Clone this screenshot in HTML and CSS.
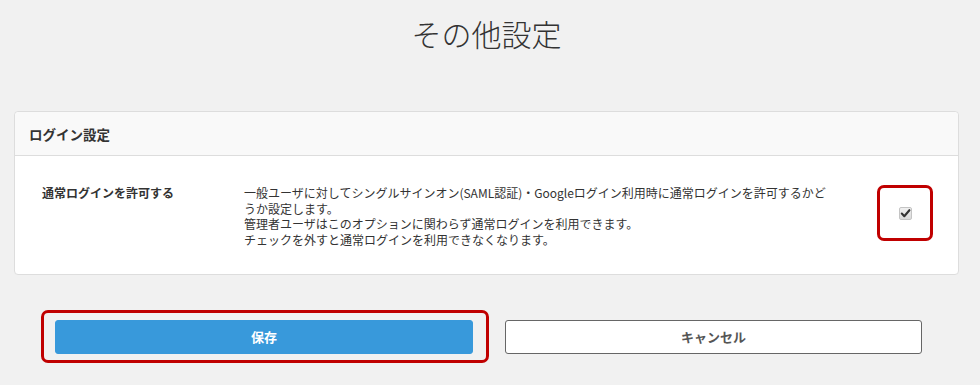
FILE: index.html
```html
<!DOCTYPE html>
<html lang="ja">
<head>
    <meta charset="UTF-8">
    <meta name="viewport" content="width=device-width, initial-scale=1.0">
    <title>その他設定</title>
    <link rel="stylesheet" href="styles.css">
</head>
<body>
    <div class="container">
        <h1 class="page-title">その他設定</h1>

        <div class="panel">
            <div class="panel-heading">ログイン設定</div>
            <div class="panel-body">
                <div class="setting-row">
                    <div class="setting-label">通常ログインを許可する</div>
                    <div class="setting-desc">
                        一般ユーザに対してシングルサインオン(SAML認証)・Googleログイン利用時に通常ログインを許可するかどうか設定します。<br>
                        管理者ユーザはこのオプションに関わらず通常ログインを利用できます。<br>
                        チェックを外すと通常ログインを利用できなくなります。
                    </div>
                    <div class="setting-check highlight">
                        <span class="check-box">
                            <svg width="11" height="11" viewBox="0 0 11 11">
                                <path d="M1.8 5.6 L4.3 8.2 L9.4 2.2" fill="none" stroke="#333" stroke-width="2.1" stroke-linecap="round" stroke-linejoin="round"/>
                            </svg>
                        </span>
                    </div>
                </div>
            </div>
        </div>

        <div class="actions">
            <div class="action-cell highlight">
                <button class="btn btn-primary">保存</button>
            </div>
            <div class="action-cell">
                <button class="btn btn-default">キャンセル</button>
            </div>
        </div>
    </div>
</body>
</html>
```
FILE: styles.css
```css
body {
    font-family: "Noto Sans CJK JP", "Noto Sans", sans-serif;
    margin: 0;
    padding: 0;
    background-color: #f1f1f1;
    color: #333;
}
.container {
    width: 945px;
    margin-left: 14px;
}
.page-title {
    margin: 15px 0 60px;
    font-size: 30px;
    font-weight: 300;
    line-height: 36px;
    text-align: center;
    color: #333;
}
.panel {
    background-color: #fff;
    border: 1px solid #ddd;
    border-radius: 4px;
}
.panel-heading {
    background-color: #f9f9f9;
    border-bottom: 1px solid #ddd;
    border-radius: 4px 4px 0 0;
    padding: 12px 14px 11px;
    font-size: 13.5px;
    font-weight: bold;
    line-height: 20px;
}
.panel-body {
    padding: 29px 27px 26px;
}
.setting-row {
    display: grid;
    grid-template-columns: 202px 592px 1fr;
    align-items: start;
}
.setting-label {
    font-size: 12px;
    font-weight: bold;
    line-height: 16px;
}
.setting-desc {
    font-size: 12px;
    line-height: 15.7px;
}
.setting-check {
    justify-self: end;
    margin-right: -2px;
    width: 50px;
    height: 50px;
    display: flex;
    align-items: center;
    justify-content: center;
}
.highlight {
    border: 3px solid #c00000;
    border-radius: 7px;
}
.check-box {
    width: 11px;
    height: 11px;
    border: 1px solid #c4c4c4;
    border-radius: 2px;
    background: linear-gradient(#f0f0f0, #dadada);
    display: flex;
    align-items: center;
    justify-content: center;
}
.actions {
    display: grid;
    grid-template-columns: 448px 448px;
    margin: 35px 0 0 27px;
}
.action-cell {
    padding: 10px 15px 9px 16px;
}
.action-cell.highlight {
    padding: 7px 13px 6px 11px;
}
.btn {
    display: block;
    width: 100%;
    height: 34px;
    border-radius: 3px;
    font-family: inherit;
    font-size: 13px;
    font-weight: bold;
    cursor: pointer;
}
.btn-primary {
    background-color: #3899db;
    border: 1px solid #3899db;
    color: #fff;
}
.btn-default {
    background-color: #fff;
    border: 1px solid #666;
    color: #555;
}
```
